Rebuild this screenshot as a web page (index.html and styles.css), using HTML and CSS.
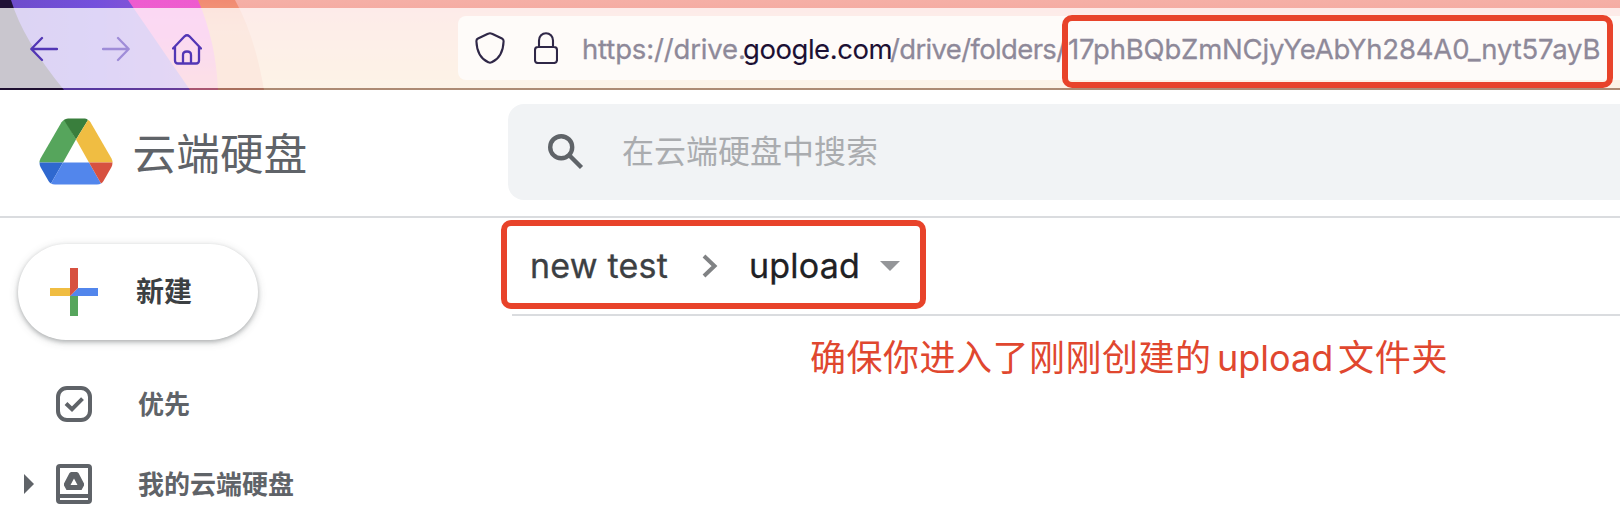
FILE: index.html
```html
<!DOCTYPE html>
<html lang="zh-CN">
<head>
<meta charset="utf-8">
<title>云端硬盘</title>
<link rel="stylesheet" href="styles.css">
</head>
<body>
<header class="browser">
  <svg class="theme" width="1620" height="90" viewBox="0 0 1620 90" aria-hidden="true">
    <defs>
      <linearGradient id="salmon" x1="0" y1="0" x2="0" y2="1"><stop offset="0" stop-color="#f5afa6"/><stop offset=".1" stop-color="#f5aca3"/><stop offset="1" stop-color="#f7cf98"/></linearGradient>
      <linearGradient id="orange" x1="0" y1="0" x2="0" y2="1"><stop offset="0" stop-color="#f18b72"/><stop offset=".35" stop-color="#f1a280"/><stop offset="1" stop-color="#f0a576"/></linearGradient>
      <linearGradient id="pink" x1="0" y1="0" x2="0" y2="1"><stop offset="0" stop-color="#ee5bd0"/><stop offset=".4" stop-color="#ec62c8"/><stop offset="1" stop-color="#f28093"/></linearGradient>
      <linearGradient id="violet" x1="0" y1="0" x2="1" y2="0"><stop offset="0" stop-color="#6d4cc9"/><stop offset=".5" stop-color="#7450dc"/><stop offset="1" stop-color="#9058d0"/></linearGradient>
    </defs>
    <path fill="url(#salmon)" d="M0 0H1620V90H0Z"/>
    <path fill="url(#orange)" d="M0 0H235Q255 36 264 90H0Z"/>
    <path fill="url(#pink)" d="M0 0H198Q216 42 218 90H0Z"/>
    <path fill="url(#violet)" d="M0 0H128L190 90H0Z"/>
    <path fill="#1f1135" d="M0 0H11Q23 40 64 90H0Z"/>
  </svg>
  <div class="toolbar">
    <nav class="nav">
      <svg width="28" height="26" viewBox="0 0 28 26"><path d="M27 13H1.5M12 2L1.3 13L12 24"/></svg>
      <svg class="disabled" width="28" height="26" viewBox="0 0 28 26"><path d="M1 13H26.5M16 2L26.7 13L16 24"/></svg>
      <svg width="30" height="31" viewBox="0 0 30 31"><path d="M1 14.5L12.6 2.3Q15 .2 17.4 2.3L29 14.5M3 13V26.5Q3 29.5 6 29.5H24Q27 29.5 27 26.5V13M11 29V21Q11 17.5 15 17.5T19 21V29"/></svg>
    </nav>
    <div class="address">
      <svg class="shield" width="30" height="32" viewBox="0 0 30 32"><path d="M15 1.2Q16 1.2 17 1.8L27 6.5Q28.7 7.3 28.6 9.2C28.3 18 26 26 16.7 30.2Q15 31.2 13.3 30.2C4 26 1.7 18 1.4 9.2Q1.3 7.3 3 6.5L13 1.8Q14 1.2 15 1.2Z"/></svg>
      <svg class="lock" width="24" height="32" viewBox="0 0 24 32"><path d="M5 15V8.5A7 7.3 0 0 1 19 8.5V15M4 15H20Q23 15 23 18V28Q23 31 20 31H4Q1 31 1 28V18Q1 15 4 15Z"/></svg>
      <div class="url"><span class="pre">https://drive.</span><span class="domain">google.com</span><span class="path">/drive/folders/</span><span class="id">17phBQbZmNCjyYeAbYh284A0_nyt57ayB</span></div>
    </div>
  </div>
  <div class="mark mark-url"></div>
</header>
<div class="appbar">
  <div class="brand">
    <svg width="74" height="67" viewBox="0 0 74 67">
      <path fill="#56a55c" d="M26 1.5L37 21.5L24 44.5H.5Q.5 42.5 1.5 40.5L22.5 4.2Q24 2 26 1.5Z"/>
      <path fill="#397e3c" d="M25 2Q26.5 .5 29 .5H46Q48 .5 49 2L37 21.5Z"/>
      <path fill="#f0bd42" d="M49 2Q50.5 2.6 51.5 4.2L72.5 40.5Q73.5 42.5 73.5 44.5H50L37 21.5Z"/>
      <path fill="#2f68cf" d="M.5 44.5H24L12 65.5Q10.500 64.500 9.500 63L1.500 49Q.5 47 .5 44.500Z"/>
      <path fill="#5286ec" d="M24 44.500H50L62 65.500Q60.500 66.500 58 66.500H16Q13.500 66.500 12 65.500Z"/>
      <path fill="#d75140" d="M50 44.500H73.500Q73.500 47 72.500 49L64.500 63Q63.500 64.500 62 65.500Z"/>
    </svg>
    <span class="brand-name">云端硬盘</span>
  </div>
  <div class="search">
    <svg width="36" height="36" viewBox="0 0 36 36"><circle cx="13.200" cy="13.200" r="11"/><path d="M21 21L33.500 33.500"/></svg>
    <span>在云端硬盘中搜索</span>
  </div>
</div>
<div class="body">
  <aside class="side">
    <button class="new">
      <svg width="48" height="48" viewBox="0 0 48 48"><path fill="#f0bd42" d="M0 20H20L24 24L20 28H0Z"/><path fill="#56a55c" d="M20 28H28V48H20Z"/><path fill="#5286ec" d="M28 20H48V28H20Z"/><path fill="#d75140" d="M20 0H28V20L20 28Z"/></svg>
      <span>新建</span>
    </button>
    <div class="item">
      <span class="caret"></span>
      <svg width="36" height="36" viewBox="0 0 36 36"><rect class="line" x="2" y="2" width="32" height="32" rx="9"/><path class="line" d="M10 17.500L16 23.200L26.500 12.700"/></svg>
      <span class="label">优先</span>
    </div>
    <div class="item">
      <span class="caret"><svg width="10" height="20" viewBox="0 0 10 20"><path fill="#5f6368" d="M0 0L10 10L0 20Z"/></svg></span>
      <svg width="36" height="40" viewBox="0 0 36 40"><rect class="line" x="2" y="2" width="32" height="36" rx="2"/><path fill="#5f6368" d="M3 30H33V34H3Z"/><path fill="#5f6368" fill-rule="evenodd" d="M15 8H21L22.500 9L28 19.500V21.500L25.500 26H10.500L8 21.500V19.500L13.500 9ZM18 14.500L14.500 21H21.500Z"/></svg>
      <span class="label">我的云端硬盘</span>
    </div>
  </aside>
  <main class="content">
    <div class="crumbs">
      <span class="parent">new test</span>
      <svg class="chev" width="16" height="24" viewBox="0 0 16 24"><path d="M2 2L12.500 12L2 22"/></svg>
      <span class="current">upload</span>
      <svg class="drop" width="20" height="10" viewBox="0 0 20 10"><path fill="#949699" d="M0 0H20L10 10Z"/></svg>
      <div class="mark mark-crumbs"></div>
    </div>
    <p class="note"><span class="note-a">确保你进入了刚刚创建的</span><span class="note-b">upload</span><span class="note-c">文件夹</span></p>
  </main>
</div>
</body>
</html>
```

FILE: styles.css
```css
* { box-sizing: border-box; }
body {
  margin: 0;
  width: 1620px;
  height: 514px;
  overflow: hidden;
  background: #fff;
  font-family: Inter, "Noto Sans CJK SC", sans-serif;
}
svg { display: block; flex: none; }
span { white-space: nowrap; }

.browser { position: relative; height: 90px; padding-top: 8px; }
.theme { position: absolute; left: 0; top: 0; }
.toolbar {
  position: relative;
  display: flex;
  align-items: center;
  height: 82px;
  background: rgba(255, 255, 255, .76);
  background-clip: padding-box;
  border-bottom: 2px solid rgba(28, 8, 45, .34);
}
.nav { display: flex; align-items: center; gap: 44px; width: 458px; padding-left: 30px; padding-top: 2px; }
.nav svg { fill: none; stroke: #5236b5; stroke-width: 2.3; stroke-linecap: round; stroke-linejoin: round; }
.nav svg:last-child { margin-left: -2px; }
.nav .disabled { opacity: .45; }
.address {
  display: flex;
  align-items: center;
  flex: 1;
  height: 64px;
  padding-left: 17px;
  border-radius: 8px 0 0 8px;
  background: #fefbf9;
}
.address svg { fill: none; stroke: #2f2747; stroke-width: 2.1; stroke-linejoin: round; }
.lock { margin-left: 29px; }
.url {
  display: flex;
  margin: 2px 0 0 24px;
  font-size: 27.5px;
  line-height: 34px;
  letter-spacing: -.15px;
  color: #8e8999;
  -webkit-text-stroke: .3px currentColor;
}
.pre { width: 161px; }
.domain { width: 147px; letter-spacing: -.45px; color: #1c1034; -webkit-text-stroke-width: .1px; }
.path { width: 178px; letter-spacing: -.65px; }
.id { letter-spacing: -.18px; }

.mark { position: absolute; border: 6px solid #e8432a; border-radius: 10px; }
.mark-url { left: 1062px; top: 15px; width: 551px; height: 73px; }

.appbar { display: flex; height: 128px; border-bottom: 2px solid #dadcdf; }
.brand { display: flex; align-items: center; width: 508px; padding-left: 39px; padding-bottom: 3px; }
.brand-name { margin: 6px 0 0 19.500px; font-size: 43.700px; line-height: 60px; color: #5f6368; }
.search {
  display: flex;
  align-items: center;
  flex: 1;
  height: 96px;
  margin-top: 14px;
  padding-left: 40px;
  border-radius: 16px 0 0 16px;
  background: #f1f3f5;
}
.search svg { fill: none; stroke: #5f6368; stroke-width: 4.400; }
.search span { margin: 0 0 6px 38px; font-size: 32px; color: #aaacaf; }

.body { display: flex; height: 296px; }
.side { width: 512px; padding-top: 26px; }
.new {
  display: flex;
  align-items: center;
  width: 240px;
  height: 96px;
  margin: 0 0 24px 18px;
  padding: 0 0 0 32px;
  border: 0;
  border-radius: 48px;
  background: #fff;
  box-shadow: 0 2px 4px rgba(60, 64, 67, .32), 0 2px 8px 1px rgba(60, 64, 67, .14);
  font: 600 28px/40px Inter, "Noto Sans CJK SC", sans-serif;
  color: #3c4043;
}
.new span { margin-left: 38px; }
.item { display: flex; align-items: center; height: 80px; padding-left: 24px; }
.caret { width: 32px; }
.line { fill: none; stroke: #5f6368; stroke-width: 4; }
.label { margin: 0 0 4px 46px; font-size: 26px; font-weight: 600; color: #5f6368; }

.content { flex: 1; }
.crumbs {
  position: relative;
  display: flex;
  align-items: center;
  height: 98px;
  padding-left: 18px;
  border-bottom: 2px solid #dadcdf;
  font-size: 34px;
  letter-spacing: .2px;
  color: #3c4043;
}
.parent, .current { -webkit-text-stroke: .3px currentColor; }
.parent { width: 172px; margin-bottom: 2px; }
.chev { fill: none; stroke: #808284; stroke-width: 4; }
.current { width: 116px; margin: 0 0 2px 31px; color: #202124; }
.drop { margin-left: 15px; }
.mark-crumbs { left: -11px; top: 2px; width: 425px; height: 89px; }
.note { display: flex; margin: 15px 0 0 298px; font-size: 36px; line-height: 54px; color: #e0472f; }
.note-a { width: 407px; letter-spacing: .5px; }
.note-b { width: 121px; }
.note-c { letter-spacing: .7px; }
```
